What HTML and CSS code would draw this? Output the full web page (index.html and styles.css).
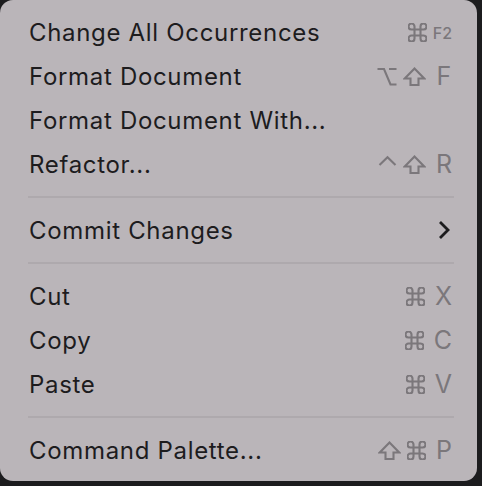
FILE: index.html
```html
<!DOCTYPE html>
<html>
<head>
<meta charset="utf-8">
<link rel="stylesheet" href="styles.css">
</head>
<body>
<div class="menu">
  <div class="item">
    <span class="label">Change All Occurrences</span>
    <span class="keys">
      <svg class="cmd" viewBox="2.5 2.5 19 19"><path d="M15 6v12a3 3 0 1 0 3-3H6a3 3 0 1 0 3 3V6a3 3 0 1 0-3 3h12a3 3 0 1 0-3-3z"/></svg>
      <span class="key small">F2</span>
    </span>
  </div>
  <div class="item">
    <span class="label">Format Document</span>
    <span class="keys">
      <svg class="opt" viewBox="0 0 20 19"><path d="M0.5 2h6.5l6.5 15.5H19.5M12 2h7.5"/></svg>
      <svg class="shift" viewBox="0 0 23 19"><path d="M7.5 18V11.5H1.8L11.5 1.5l9.7 10H15.5V18z"/></svg>
      <span class="key">F</span>
    </span>
  </div>
  <div class="item">
    <span class="label">Format Document With...</span>
  </div>
  <div class="item">
    <span class="label">Refactor...</span>
    <span class="keys">
      <svg class="ctrl" viewBox="0 0 19 19"><path d="M1.5 10L9.5 2.3l8 7.7"/></svg>
      <svg class="shift" viewBox="0 0 23 19"><path d="M7.5 18V11.5H1.8L11.5 1.5l9.7 10H15.5V18z"/></svg>
      <span class="key">R</span>
    </span>
  </div>
  <div class="sep"></div>
  <div class="item">
    <span class="label">Commit Changes</span>
    <svg class="chev" viewBox="0 0 12 20"><path d="M2 2l8 8-8 8"/></svg>
  </div>
  <div class="sep"></div>
  <div class="item">
    <span class="label">Cut</span>
    <span class="keys">
      <svg class="cmd" viewBox="2.5 2.5 19 19"><path d="M15 6v12a3 3 0 1 0 3-3H6a3 3 0 1 0 3 3V6a3 3 0 1 0-3 3h12a3 3 0 1 0-3-3z"/></svg>
      <span class="key">X</span>
    </span>
  </div>
  <div class="item">
    <span class="label">Copy</span>
    <span class="keys">
      <svg class="cmd" viewBox="2.5 2.5 19 19"><path d="M15 6v12a3 3 0 1 0 3-3H6a3 3 0 1 0 3 3V6a3 3 0 1 0-3 3h12a3 3 0 1 0-3-3z"/></svg>
      <span class="key">C</span>
    </span>
  </div>
  <div class="item">
    <span class="label">Paste</span>
    <span class="keys">
      <svg class="cmd" viewBox="2.5 2.5 19 19"><path d="M15 6v12a3 3 0 1 0 3-3H6a3 3 0 1 0 3 3V6a3 3 0 1 0-3 3h12a3 3 0 1 0-3-3z"/></svg>
      <span class="key">V</span>
    </span>
  </div>
  <div class="sep"></div>
  <div class="item">
    <span class="label">Command Palette...</span>
    <span class="keys">
      <svg class="shift" viewBox="0 0 23 19"><path d="M7.5 18V11.5H1.8L11.5 1.5l9.7 10H15.5V18z"/></svg>
      <svg class="cmd" viewBox="2.5 2.5 19 19"><path d="M15 6v12a3 3 0 1 0 3-3H6a3 3 0 1 0 3 3V6a3 3 0 1 0-3 3h12a3 3 0 1 0-3-3z"/></svg>
      <span class="key">P</span>
    </span>
  </div>
</div>
</body>
</html>
```
FILE: styles.css
```css
html, body {
  margin: 0;
  padding: 0;
  background: #1c1c1e;
  width: 482px;
  height: 486px;
  overflow: hidden;
}
.menu {
  width: 477px;
  height: 481px;
  box-sizing: border-box;
  background: #bab5b9;
  border-radius: 13px;
  padding: 10px 0 9px;
  font-family: Inter, "Noto Sans", sans-serif;
  color: #1d1c1e;
}
.item {
  height: 44px;
  display: flex;
  align-items: center;
  justify-content: space-between;
  padding: 0 25px 0 29px;
}
.label {
  font-size: 24px;
  letter-spacing: 0.68px;
}
.keys {
  display: flex;
  align-items: center;
  gap: 6px;
  color: #7b777b;
}
.keys svg {
  fill: none;
  stroke: #7b777b;
  stroke-width: 2.1;
  stroke-linejoin: miter;
  flex: none;
}
.cmd {
  width: 19px;
  height: 19px;
}
.opt {
  width: 20px;
  height: 19px;
}
.shift {
  width: 23px;
  height: 19px;
}
.ctrl {
  width: 19px;
  height: 19px;
}
.key {
  font-size: 25px;
  min-width: 16px;
  margin-left: 4px;
  text-align: center;
}
.key.small {
  font-size: 16px;
  font-weight: 500;
  margin-left: 0;
  margin-top: 2px;
}
.chev {
  width: 12px;
  height: 20px;
  fill: none;
  stroke: #1d1c1e;
  stroke-width: 2.8;
  margin-right: 2px;
}
.sep {
  height: 2px;
  margin: 10px 23px 10px 28px;
  background: #a29ea2;
  transform: scaleY(0.5);
}
```
